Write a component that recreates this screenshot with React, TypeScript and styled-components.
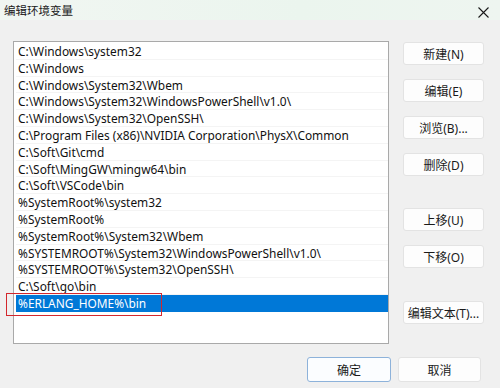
import styled, { createGlobalStyle } from 'styled-components'

const paths = [
  'C:\\Windows\\system32',
  'C:\\Windows',
  'C:\\Windows\\System32\\Wbem',
  'C:\\Windows\\System32\\WindowsPowerShell\\v1.0\\',
  'C:\\Windows\\System32\\OpenSSH\\',
  'C:\\Program Files (x86)\\NVIDIA Corporation\\PhysX\\Common',
  'C:\\Soft\\Git\\cmd',
  'C:\\Soft\\MingGW\\mingw64\\bin',
  'C:\\Soft\\VSCode\\bin',
  '%SystemRoot%\\system32',
  '%SystemRoot%',
  '%SystemRoot%\\System32\\Wbem',
  '%SYSTEMROOT%\\System32\\WindowsPowerShell\\v1.0\\',
  '%SYSTEMROOT%\\System32\\OpenSSH\\',
  'C:\\Soft\\go\\bin',
  '%ERLANG_HOME%\\bin',
]

const sideButtons = [
  { label: '新建(N)', gap: 1 },
  { label: '编辑(E)', gap: 14 },
  { label: '浏览(B)...', gap: 14 },
  { label: '删除(D)', gap: 14 },
  { label: '上移(U)', gap: 32 },
  { label: '下移(O)', gap: 14 },
  { label: '编辑文本(T)...', gap: 33 },
]

const selected = paths.length - 1

export default function App() {
  return (
    <>
      <GlobalStyle />
      <Dialog>
        <TitleBar>
          <span>编辑环境变量</span>
          <CloseIcon width="11" height="11" viewBox="0 0 11 11">
            <path d="M0.5 0.5 L10.5 10.5 M10.5 0.5 L0.5 10.5" stroke="#1a1a1a" strokeWidth="1.1" />
          </CloseIcon>
        </TitleBar>
        <Body>
          <PathList>
            {paths.map((p, i) => (
              <PathRow key={p} $active={i === selected}>
                {p}
                {i === selected && <Marker />}
              </PathRow>
            ))}
          </PathList>
          <SideColumn>
            {sideButtons.map(b => (
              <SideButton key={b.label} $gap={b.gap}>
                {b.label}
              </SideButton>
            ))}
          </SideColumn>
        </Body>
        <Footer>
          <DialogButton $primary>确定</DialogButton>
          <DialogButton>取消</DialogButton>
        </Footer>
      </Dialog>
    </>
  )
}

const GlobalStyle = createGlobalStyle`
  body {
    margin: 0;
    background: #f0f0f0;
    font-family: 'Noto Sans', 'Noto Sans CJK SC', sans-serif;
  }
`
const Dialog = styled.div`
  width: 500px;
  height: 388px;
  display: flex;
  flex-direction: column;
  background: #f0f0f0;
  overflow: hidden;
`
const TitleBar = styled.div`
  height: 20px;
  padding: 0 11px 0 4px;
  display: flex;
  align-items: center;
  justify-content: space-between;
  background: linear-gradient(90deg, #f1f6f2 0%, #ebf5ee 60%, #eef5f0 100%);
  font-size: 11.5px;
  color: #1a1a1a;
  font-family: 'Noto Sans CJK SC', sans-serif;
`
const CloseIcon = styled.svg`
  display: block;
  margin-top: 4px;
`
const Body = styled.div`
  display: flex;
  padding: 21px 0 0 13px;
  gap: 14px;
`
const PathList = styled.div`
  width: 376px;
  height: 303px;
  box-sizing: border-box;
  border: 1px solid #a9a9a9;
  background: #fff;
  padding: 1px 0 0 2px;
`
const PathRow = styled.div<{ $active?: boolean }>`
  position: relative;
  height: 16.8px;
  line-height: 16.8px;
  padding-left: 2px;
  font-size: 11.9px;
  white-space: nowrap;
  color: ${p => (p.$active ? '#fff' : '#111')};
  background: ${p => (p.$active ? '#0078d7' : 'transparent')};
  box-shadow: inset 0 -1px 0 ${p => (p.$active ? 'transparent' : '#f4f4f4')};
`
const Marker = styled.span`
  position: absolute;
  left: -10px;
  top: -2px;
  width: 156px;
  height: 23px;
  border: 1px solid #d3272d;
  box-sizing: border-box;
`
const SideColumn = styled.div`
  width: 81px;
  display: flex;
  flex-direction: column;
`
const SideButton = styled.button<{ $gap: number }>`
  margin-top: ${p => p.$gap}px;
  height: 23px;
  padding: 0;
  border: 1px solid #e3e3e3;
  border-radius: 3px;
  background: #fdfdfd;
  font-family: 'Noto Sans', 'Noto Sans CJK SC', sans-serif;
  font-size: 12px;
  color: #1a1a1a;
`
const Footer = styled.div`
  display: flex;
  justify-content: flex-end;
  gap: 7px;
  margin-top: 13px;
  padding-right: 19px;
`
const DialogButton = styled.button<{ $primary?: boolean }>`
  width: ${p => (p.$primary ? 84 : 83)}px;
  height: 25px;
  padding: 0;
  border: 1px solid ${p => (p.$primary ? '#8db2da' : '#e3e3e3')};
  border-radius: 3px;
  background: ${p => (p.$primary ? '#fbfdff' : '#fdfdfd')};
  font-family: 'Noto Sans CJK SC', sans-serif;
  font-size: 12px;
  color: #1a1a1a;
`
